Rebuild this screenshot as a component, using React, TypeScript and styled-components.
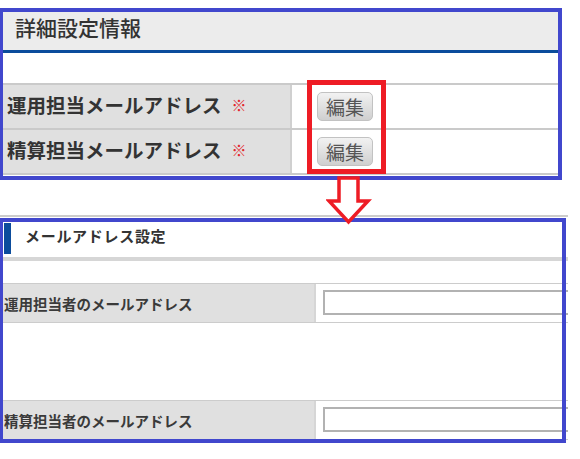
import styled, { createGlobalStyle } from 'styled-components'

const GlobalStyle = createGlobalStyle`
    html, body {
        margin: 0;
        padding: 0;
        background: #fff;
    }

    body {
        font-family: "Noto Sans CJK JP", "Noto Sans", sans-serif;
        color: #333;
    }
`

const mailRows = ['運用担当メールアドレス', '精算担当メールアドレス']

const Arrow = () => (
    <ArrowSvg width="46" height="52" viewBox="0 0 46 52">
        <polygon
            points="13,3 32,3 32,26 42,26 22.5,47 3,26 13,26"
            fill="#fff"
            stroke="#ee1c25"
            strokeWidth="3.5"
            strokeLinejoin="miter"
        />
    </ArrowSvg>
)

export default function App() {
    return (
        <>
            <GlobalStyle />
            <Page>
                <DetailShot>
                    <DetailHeader>詳細設定情報</DetailHeader>
                    <DetailTable>
                        {mailRows.map((label) => (
                            <DetailRow key={label}>
                                <DetailLabel>
                                    {label}
                                    <Required>※</Required>
                                </DetailLabel>
                                <DetailValue>
                                    <EditButton type="button">編集</EditButton>
                                </DetailValue>
                            </DetailRow>
                        ))}
                    </DetailTable>
                </DetailShot>

                <FormShot>
                    <FormHeader>
                        <Accent />
                        <FormTitle>メールアドレス設定</FormTitle>
                    </FormHeader>
                    <FormRow>
                        <FormLabel>運用担当者のメールアドレス</FormLabel>
                        <FormValue>
                            <TextInput type="text" />
                        </FormValue>
                    </FormRow>
                    <FormRow $gap={77}>
                        <FormLabel>精算担当者のメールアドレス</FormLabel>
                        <FormValue>
                            <TextInput type="text" />
                        </FormValue>
                    </FormRow>
                </FormShot>

                {/* annotations drawn over the screenshots */}
                <Frame $top={8} $width={563} $height={172} />
                <Frame $top={218} $width={567} $height={225} />
                <Highlight />
                <Arrow />
            </Page>
        </>
    )
}

const Page = styled.div`
    position: relative;
    width: 580px;
    height: 459px;
    padding-top: 12px;
    box-sizing: border-box;
    overflow: hidden;
`

const DetailShot = styled.section`
    margin-left: 3px;
    width: 555px;
`

const DetailHeader = styled.h2`
    margin: 0 0 30px 0;
    height: 38px;
    padding-left: 12px;
    background: #ececec;
    border-bottom: 3px solid #0b4c9c;
    font-size: 21px;
    font-weight: 500;
    line-height: 30px;
    color: #333;
`

const DetailTable = styled.div`
    border-top: 2px solid #cacaca;
`

const DetailRow = styled.div`
    display: flex;
    height: 43px;
    border-bottom: 2px solid #cacaca;
`

const DetailLabel = styled.div`
    display: flex;
    flex-shrink: 0;
    align-items: center;
    width: 289px;
    padding: 0 0 5px 4px;
    box-sizing: border-box;
    background: #e0e0e0;
    border-right: 2px solid #d0d0d0;
    font-size: 19.5px;
    font-weight: 700;
    color: #333;
    white-space: nowrap;
`

const Required = styled.span`
    margin-left: 10px;
    font-size: 15px;
    font-weight: 400;
    color: #e3262b;
`

const DetailValue = styled.div`
    flex: 1;
    padding: 7px 0 0 25px;
    background: #fff;
`

const EditButton = styled.button`
    width: 56px;
    height: 29px;
    padding: 0;
    border: 1px solid #c2c2c2;
    border-radius: 5px;
    background: linear-gradient(#f2f2f2, #cfcfcf);
    font-family: inherit;
    font-size: 19px;
    line-height: 25px;
    color: #555;
`

const FormShot = styled.section`
    width: 568px;
    margin-top: 40px;
    overflow: hidden;
`

const FormHeader = styled.div`
    display: flex;
    align-items: center;
    height: 40px;
    padding-left: 4px;
    border-top: 2px solid #cccccc;
    border-bottom: 4px solid #d6d6d6;
    margin-bottom: 22px;
    background: #fff;
`

const Accent = styled.span`
    width: 7px;
    height: 31px;
    margin-top: 2px;
    background: #0b4c9c;
`

const FormTitle = styled.h3`
    margin: 0 0 4px 14px;
    font-size: 15px;
    font-weight: 700;
    letter-spacing: 0.7px;
    color: #333;
`

const FormRow = styled.div<{ $gap?: number }>`
    display: flex;
    height: 38px;
    margin-top: ${(p) => p.$gap ?? 0}px;
    border-top: 1px solid #cccccc;
    border-bottom: 1px solid #cccccc;
`

const FormLabel = styled.div`
    display: flex;
    flex-shrink: 0;
    align-items: center;
    width: 316px;
    padding-left: 4px;
    box-sizing: border-box;
    background: #e0e0e0;
    border-right: 2px solid #d6d6d6;
    font-size: 14.5px;
    font-weight: 700;
    color: #3a3a3a;
    white-space: nowrap;
`

const FormValue = styled.div`
    flex: 1;
    min-width: 0;
    padding: 6px 0 0 7px;
    background: #fff;
`

const TextInput = styled.input`
    display: block;
    width: 260px;
    height: 25px;
    box-sizing: border-box;
    border: 2px solid #b2b2b2;
    background: #fff;
`

const Frame = styled.div<{ $top: number; $width: number; $height: number }>`
    position: absolute;
    left: -1px;
    top: ${(p) => p.$top}px;
    width: ${(p) => p.$width}px;
    height: ${(p) => p.$height}px;
    box-sizing: border-box;
    border: 4px solid #4147cd;
    pointer-events: none;
`

const Highlight = styled.div`
    position: absolute;
    left: 307px;
    top: 80px;
    width: 79px;
    height: 94px;
    box-sizing: border-box;
    border: 5px solid #ee1c25;
    pointer-events: none;
`

const ArrowSvg = styled.svg`
    position: absolute;
    left: 326px;
    top: 175px;
    display: block;
`
